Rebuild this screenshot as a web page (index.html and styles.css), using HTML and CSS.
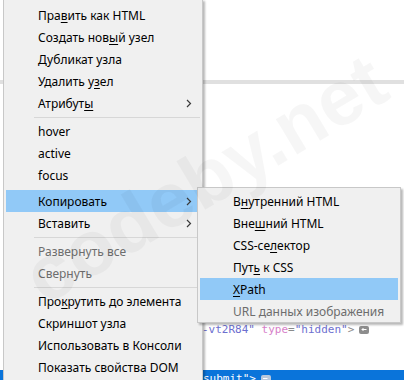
FILE: index.html
```html
<!DOCTYPE html>
<html lang="ru">
<head>
<meta charset="utf-8">
<link rel="stylesheet" href="styles.css">
</head>
<body>
<div class="page">
  <div class="top"></div>
  <div class="hbar"></div>
  <div class="blank"></div>
  <div class="row">
    <span class="code"><span class="av">-vt2R84"</span> <span class="an">type</span><span class="eq">=</span><span class="av">"hidden"</span><span class="eq">&gt;</span></span>
    <span class="ev"><svg width="9" height="7" viewBox="0 0 9 7"><path d="M2 3.5h4.5M2 3.5l1.5-1.5M2 3.5l1.5 1.5" stroke="#fff" stroke-width="1" fill="none"/></svg></span>
  </div>
  <div class="row sel">
    <span class="code">submit"&gt;</span>
    <span class="ev light"><svg width="9" height="7" viewBox="0 0 9 7"><path d="M2 3.5h4.5" stroke="#fff" stroke-width="1" fill="none"/></svg></span>
  </div>
</div>

<div class="menu main">
  <div class="item"><span>Пра<u>в</u>ить как HTML</span></div>
  <div class="item"><span>Создать нов<u>ы</u>й узел</span></div>
  <div class="item"><span>Дубликат узла</span></div>
  <div class="item"><span>Удалить у<u>з</u>ел</span></div>
  <div class="item sub"><span>Атрибут<u>ы</u></span><svg class="chev" width="6" height="9" viewBox="0 0 6 9"><path d="M1 1l3.5 3.5L1 8" stroke="#3a3a3a" stroke-width="1.2" fill="none"/></svg></div>
  <div class="sep"></div>
  <div class="item"><span>hover</span></div>
  <div class="item"><span>active</span></div>
  <div class="item"><span>focus</span></div>
  <div class="gap"></div>
  <div class="item sub hl"><span>Копировать</span><svg class="chev" width="6" height="9" viewBox="0 0 6 9"><path d="M1 1l3.5 3.5L1 8" stroke="#3a3a3a" stroke-width="1.2" fill="none"/></svg></div>
  <div class="item sub"><span>Вставить</span><svg class="chev" width="6" height="9" viewBox="0 0 6 9"><path d="M1 1l3.5 3.5L1 8" stroke="#3a3a3a" stroke-width="1.2" fill="none"/></svg></div>
  <div class="sep"></div>
  <div class="item dis"><span>Развернуть все</span></div>
  <div class="item dis"><span>Свернуть</span></div>
  <div class="sep"></div>
  <div class="item"><span>Про<u>к</u>рутить до элемента</span></div>
  <div class="item"><span>Скриншот узла</span></div>
  <div class="item"><span>Использовать в Консоли</span></div>
  <div class="item"><span>Показать свойства DOM</span></div>
</div>

<div class="menu submenu">
  <div class="item"><span>В<u>н</u>утренний HTML</span></div>
  <div class="item"><span>Вне<u>ш</u>ний HTML</span></div>
  <div class="item"><span>CSS-се<u>л</u>ектор</span></div>
  <div class="item"><span>Пут<u>ь</u> к CSS</span></div>
  <div class="item hl"><span><u>X</u>Path</span></div>
  <div class="item dis"><span>URL данных изображения</span></div>
</div>

<div class="watermark">codeby.net</div>
</body>
</html>
```
FILE: styles.css
```css
html, body {
  margin: 0;
  padding: 0;
}
body {
  width: 404px;
  height: 380px;
  overflow: hidden;
  position: relative;
  background: #fff;
  font-family: "Noto Sans", "Open Sans", sans-serif;
}
.page {
  display: flex;
  flex-direction: column;
}
.top {
  height: 80px;
}
.hbar {
  height: 4px;
  background: #e0e0e0;
}
.blank {
  height: 237px;
}
.row {
  height: 17px;
  display: flex;
  align-items: center;
  padding-left: 202px;
  font-family: "DejaVu Sans Mono", monospace;
  font-size: 11px;
  white-space: pre;
}
.row.sel {
  margin-top: 32px;
  background: #0a74da;
  color: #fff;
  padding-left: 203px;
}
.av { color: #6d6fcf; }
.an { color: #d77fc9; }
.eq { color: #8a8a8a; }
.ev {
  display: inline-flex;
  align-items: center;
  justify-content: center;
  width: 10px;
  height: 8px;
  margin-left: 5px;
  background: #8d8d8d;
  border-radius: 2px;
}
.ev.light { background: #b7c8dc; }

.menu {
  position: absolute;
  box-sizing: border-box;
  background: #f0f0f0;
  border: 1px solid #c8c8c8;
  box-shadow: 2px 2px 2px rgba(0, 0, 0, 0.28);
  font-size: 12px;
  color: #000;
}
.main {
  left: 3px;
  top: -1px;
  width: 200px;
  padding: 4px 0 6px;
}
.submenu {
  left: 197px;
  top: 187px;
  width: 204px;
  padding: 2px 0 0;
}
.item {
  height: 22px;
  display: flex;
  align-items: center;
  margin: 0 4px 0 2px;
  padding-left: 32px;
  padding-right: 6px;
  white-space: pre;
}
.submenu .item {
  margin: 0 2px 0 2px;
  padding-left: 33px;
}
.item.sub {
  justify-content: space-between;
}
.item.hl {
  background: #91c9f7;
}
.item.dis {
  color: #6d6d6d;
}
u {
  text-decoration-thickness: 1px;
  text-underline-offset: 2px;
}
.sep {
  height: 1px;
  background: #d7d7d7;
  margin: 3px 2px 2px 30px;
}
.gap {
  height: 4px;
}
.watermark {
  position: absolute;
  left: 2px;
  top: 140px;
  width: 404px;
  text-align: center;
  font-family: "Liberation Sans", sans-serif;
  font-weight: bold;
  font-size: 78px;
  line-height: 1;
  color: rgba(0, 0, 0, 0.035);
  transform: rotate(-31deg);
  pointer-events: none;
  white-space: nowrap;
}
```
